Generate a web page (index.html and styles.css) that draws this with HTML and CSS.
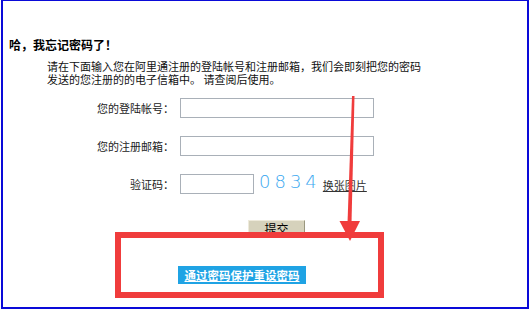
FILE: index.html
```html
<!DOCTYPE html>
<html lang="zh-CN">
<head>
<meta charset="utf-8">
<title>忘记密码</title>
<link rel="stylesheet" href="styles.css">
</head>
<body>
<div class="frame">
  <h1 class="title">哈，我忘记密码了！</h1>
  <p class="intro">请在下面输入您在阿里通注册的登陆帐号和注册邮箱，我们会即刻把您的密码<br>发送的您注册的的电子信箱中。 请查阅后使用。</p>
  <form class="form">
    <label class="label">您的登陆帐号：</label>
    <input class="field" type="text">
    <label class="label">您的注册邮箱：</label>
    <input class="field" type="text">
    <label class="label">验证码：</label>
    <div class="captcha-row">
      <input class="field short" type="text">
      <span class="captcha">0834</span>
      <a class="change" href="#">换张图片</a>
    </div>
  </form>
  <div class="submit-row"><button class="submit" type="button">提交</button></div>
  <div class="protect-row"><a class="protect" href="#">通过密码保护重设密码</a></div>
</div>
<svg class="annot" width="529" height="309" viewBox="0 0 529 309">
  <rect x="118" y="235" width="263" height="60" fill="none" stroke="#f03c3c" stroke-width="6"/>
  <polygon points="352,96 354.5,96 351.5,223 347.5,223" fill="#f03c3c"/>
  <polygon points="339.5,221 360,221 350,241" fill="#f03c3c"/>
</svg>
</body>
</html>
```
FILE: styles.css
```css
html, body {
  margin: 0;
  padding: 0;
  background: #ffffff;
}
body {
  position: relative;
  width: 529px;
  height: 309px;
  overflow: hidden;
  font-family: "Noto Sans CJK SC", "Noto Sans", sans-serif;
  color: #000;
}
.frame {
  box-sizing: border-box;
  margin-left: 1px;
  width: 528px;
  height: 309px;
  border: 2px solid #0a0ad8;
  border-top-width: 1px;
  padding-top: 37px;
}
.title {
  margin: 0 0 0 6px;
  font-size: 12px;
  line-height: 14px;
  font-weight: 700;
}
.intro {
  margin: 8px 0 0 44px;
  font-size: 11px;
  line-height: 13px;
  color: #111;
}
.form {
  display: grid;
  grid-template-columns: 171px auto;
  column-gap: 6px;
  row-gap: 18px;
  align-items: center;
  margin-top: 12px;
}
.label {
  text-align: right;
  font-size: 11px;
  line-height: 20px;
  color: #222;
}
.field {
  box-sizing: border-box;
  width: 194px;
  height: 20px;
  margin: 0;
  border: 1px solid #a9b0b8;
  background: #fff;
  padding: 0;
}
.field.short {
  width: 74px;
}
.captcha-row {
  display: flex;
  align-items: center;
}
.captcha {
  margin-left: 5px;
  font-family: "DejaVu Sans", sans-serif;
  font-size: 18px;
  font-weight: 200;
  line-height: 20px;
  letter-spacing: 4px;
  color: #3aa8f0;
  position: relative;
  top: -2px;
}
.change {
  margin-left: 2px;
  font-size: 11px;
  line-height: 20px;
  color: #333;
  text-decoration: underline;
  position: relative;
  top: 1px;
}
.submit-row {
  margin: 26px 0 0 245px;
  height: 18px;
}
.submit {
  display: block;
  box-sizing: border-box;
  width: 57px;
  height: 18px;
  margin: 0;
  padding: 0;
  font-family: "Noto Sans CJK SC", sans-serif;
  font-size: 12px;
  line-height: 14px;
  background: #d6d2bc;
  border: 1px solid #9a977f;
  border-top-color: #eeeadb;
  border-left-color: #eeeadb;
  color: #000;
}
.protect-row {
  margin: 28px 0 0 175px;
  height: 18px;
}
.protect {
  display: block;
  width: 128px;
  height: 18px;
  box-sizing: border-box;
  background: #1fa3e4;
  color: #fff;
  font-size: 11.5px;
  font-weight: 700;
  line-height: 18px;
  text-align: center;
  text-decoration: underline;
}
.annot {
  position: absolute;
  left: 0;
  top: 0;
  pointer-events: none;
}
```
